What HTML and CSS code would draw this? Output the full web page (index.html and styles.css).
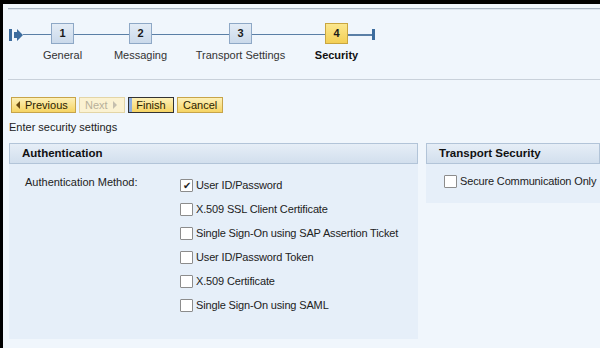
FILE: index.html
```html
<!DOCTYPE html>
<html lang="en">
<head>
    <meta charset="UTF-8">
    <title>Security Settings</title>
    <link rel="stylesheet" href="styles.css">
</head>
<body>
<div class="frame">

    <div class="roadmap">
        <svg class="rm-start" width="14" height="12" viewBox="0 0 14 12">
            <rect x="0" y="0" width="3" height="12" fill="#3c6c9e"/>
            <path d="M5 3 H8 V0 L14 6 L8 12 V9 H5 Z" fill="#3c6c9e"/>
        </svg>
        <div class="rm-line w28"></div>
        <div class="step">
            <div class="step-box">1</div>
            <div class="step-label">General</div>
        </div>
        <div class="rm-line w55"></div>
        <div class="step">
            <div class="step-box">2</div>
            <div class="step-label">Messaging</div>
        </div>
        <div class="rm-line w77"></div>
        <div class="step">
            <div class="step-box">3</div>
            <div class="step-label">Transport Settings</div>
        </div>
        <div class="rm-line w73"></div>
        <div class="step current">
            <div class="step-box">4</div>
            <div class="step-label">Security</div>
        </div>
        <div class="rm-line w26"></div>
        <div class="rm-end"></div>
    </div>

    <div class="toolbar">
        <button class="btn prev"><span class="arrow-left"></span>Previous</button>
        <button class="btn disabled">Next<span class="arrow-right"></span></button>
        <button class="btn focused">Finish</button>
        <button class="btn">Cancel</button>
    </div>

    <p class="hint">Enter security settings</p>

    <div class="panels">
        <div class="panel auth">
            <div class="panel-head">Authentication</div>
            <div class="panel-body auth-body">
                <div class="field-label">Authentication Method:</div>
                <div class="options">
                    <label class="opt"><span class="cb checked">&#10004;</span>User ID/Password</label>
                    <label class="opt"><span class="cb"></span>X.509 SSL Client Certificate</label>
                    <label class="opt"><span class="cb"></span>Single Sign-On using SAP Assertion Ticket</label>
                    <label class="opt"><span class="cb"></span>User ID/Password Token</label>
                    <label class="opt"><span class="cb"></span>X.509 Certificate</label>
                    <label class="opt"><span class="cb"></span>Single Sign-On using SAML</label>
                </div>
            </div>
        </div>

        <div class="panel transport">
            <div class="panel-head">Transport Security</div>
            <div class="panel-body transport-body">
                <label class="opt"><span class="cb"></span>Secure Communication Only</label>
            </div>
        </div>
    </div>

</div>
</body>
</html>
```

FILE: styles.css
```css
body {
    margin: 0;
    font-family: 'Liberation Sans', Arial, sans-serif;
    font-size: 11px;
    color: #222;
    background: #f0f6fc;
}

.frame {
    height: 344px;
    border-top: 4px solid #000;
    border-left: 3px solid #000;
    overflow: hidden;
}

/* roadmap */
.roadmap {
    display: flex;
    align-items: flex-start;
    margin: 4px 0 0 5px;
    padding: 14px 0 0 1px;
    height: 56px;
    border-top: 1px solid #a9b6c5;
    border-bottom: 1px solid #c9d1da;
    box-shadow: inset 0 1px 0 #dde5ee;
}

.rm-start {
    margin-top: 6px;
}

.rm-line {
    height: 1px;
    margin-top: 11px;
    background: #5a7fa6;
}

.w28 { width: 28px; }
.w55 { width: 55px; }
.w77 { width: 77px; }
.w73 { width: 73px; }
.w26 { width: 24px; height: 2px; }

.rm-end {
    width: 3px;
    height: 11px;
    margin-top: 6px;
    background: #3c6c9e;
}

.step {
    width: 23px;
    display: flex;
    flex-direction: column;
    align-items: center;
}

.step-box {
    width: 21px;
    height: 19px;
    border: 1px solid #8ea8c6;
    background: linear-gradient(#e3ecf6, #cad9ea);
    text-align: center;
    line-height: 19px;
    font-weight: bold;
    font-size: 11px;
    color: #1a1a1a;
}

.step-label {
    margin-top: 5px;
    white-space: nowrap;
    color: #333;
    font-size: 11px;
}

.current .step-box {
    border-color: #c9a640;
    background: linear-gradient(#fbe78e, #f3cf55);
}

.current .step-label {
    font-weight: bold;
    color: #111;
}

/* toolbar */
.toolbar {
    display: flex;
    gap: 3px;
    margin: 17px 0 0 8px;
}

.btn {
    height: 16px;
    padding: 0 5px;
    border: 1px solid #c7a449;
    background: linear-gradient(#fdf0b8, #f6d463);
    font-family: inherit;
    font-size: 11px;
    color: #2a2200;
    display: flex;
    align-items: center;
    gap: 5px;
}

.btn.prev {
    width: 65px;
    padding-left: 4px;
}

.btn.disabled {
    width: 46px;
    border-color: #e3d5a6;
    background: #fbf2d2;
    color: #b8b09a;
}

.btn.focused {
    width: 46px;
    justify-content: center;
    border-color: #333;
    box-shadow: inset 3px 0 0 #8faede;
}

.arrow-left {
    width: 0;
    height: 0;
    border-top: 4px solid transparent;
    border-bottom: 4px solid transparent;
    border-right: 4px solid #6a4a10;
}

.arrow-right {
    width: 0;
    height: 0;
    border-top: 4px solid transparent;
    border-bottom: 4px solid transparent;
    border-left: 4px solid #c5bfae;
}

.hint {
    margin: 8px 0 0 6px;
    line-height: 13px;
    color: #222;
}

/* panels */
.panels {
    display: flex;
    gap: 8px;
    margin: 9px 0 0 6px;
    align-items: flex-start;
}

.panel-head {
    height: 19px;
    line-height: 19px;
    padding-left: 12px;
    border: 1px solid #b2c4d8;
    background: linear-gradient(#e6eef7, #d2dfed);
    font-weight: bold;
    font-size: 11.5px;
    color: #111;
}

.panel-body {
    background: #e6eff9;
}

.auth {
    width: 409px;
}

.transport {
    flex: 1;
}

.auth-body {
    display: flex;
    padding: 9px 0 22px 16px;
    height: 144px;
}

.field-label {
    width: 155px;
    margin-top: 3px;
    color: #222;
}

.options {
    display: flex;
    flex-direction: column;
}

.opt {
    height: 24px;
    display: flex;
    align-items: center;
    gap: 3px;
    color: #222;
    white-space: nowrap;
    letter-spacing: -0.15px;
}

.cb {
    width: 11px;
    height: 11px;
    border: 1px solid #8c8c8c;
    border-radius: 1px;
    background: #fff;
    font-size: 10px;
    line-height: 11px;
    text-align: center;
    color: #222;
    letter-spacing: 0;
}

.transport-body {
    height: 24px;
    padding: 5px 0 10px 18px;
}
```
